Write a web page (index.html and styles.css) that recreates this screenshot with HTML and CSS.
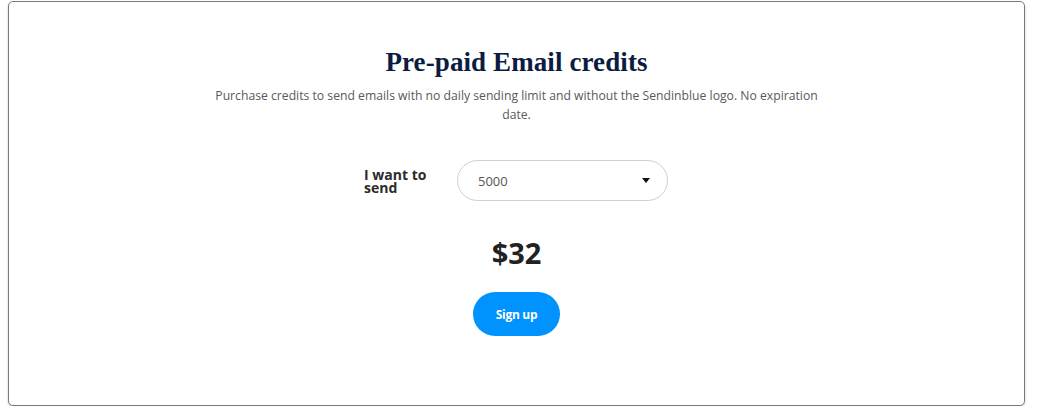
FILE: index.html
```html
<!DOCTYPE html>
<html>
<head>
<meta charset="utf-8">
<link rel="stylesheet" href="styles.css">
</head>
<body>
<div class="card">
  <h1 class="title">Pre-paid Email credits</h1>
  <p class="subtitle">Purchase credits to send emails with no daily sending limit and without the Sendinblue logo. No expiration date.</p>
  <div class="row">
    <label class="label">I want to send</label>
    <div class="select">
      <span class="value">5000</span>
      <svg class="caret" width="8" height="5" viewBox="0 0 8 5"><path d="M0 0h8L4 5z" fill="#111"/></svg>
    </div>
  </div>
  <div class="price">$32</div>
  <button class="btn">Sign up</button>
</div>
</body>
</html>
```
FILE: styles.css
```css
html, body { margin: 0; padding: 0; background: #fff; }
body { font-family: "Open Sans", "Noto Sans", sans-serif; }
.card {
  box-sizing: border-box;
  margin: 1px 18px 0 8px;
  height: 405px;
  border: 1px solid #7a7a7a;
  border-radius: 5px;
  box-shadow: 0 1px 2px rgba(0,0,0,0.25);
  display: flex;
  flex-direction: column;
  align-items: center;
  padding-top: 43px;
}
.title {
  margin: 0;
  font-family: "Liberation Serif", "DejaVu Serif", serif;
  font-weight: 700;
  font-size: 27px;
  line-height: 34px;
  color: #0c1c40;
  letter-spacing: 0.1px;
}
.subtitle {
  margin: 7px 0 0;
  width: 620px;
  text-align: center;
  font-size: 12.2px;
  line-height: 19px;
  color: #595959;
}
.row {
  display: flex;
  align-items: center;
  margin-top: 36px;
  margin-left: -1px;
  gap: 27px;
}
.label {
  width: 66px;
  font-size: 14px;
  font-weight: 700;
  line-height: 13px;
  color: #2b2b2b;
}
.select {
  box-sizing: border-box;
  width: 211px;
  height: 41px;
  border: 1px solid #cfcfcf;
  border-radius: 21px;
  display: flex;
  align-items: center;
  justify-content: space-between;
  padding: 0 17px 0 20px;
}
.value { font-size: 13px; color: #555; }
.caret { display: block; }
.price {
  margin-top: 34px;
  font-size: 29px;
  font-weight: 700;
  line-height: 36px;
  color: #222;
}
.btn {
  margin-top: 21px;
  width: 87px;
  height: 44px;
  border: none;
  border-radius: 22px;
  background: #0092ff;
  color: #fff;
  font-family: "Open Sans", sans-serif;
  font-weight: 700;
  font-size: 12px;
  letter-spacing: -0.3px;
  padding: 0;
}
```
